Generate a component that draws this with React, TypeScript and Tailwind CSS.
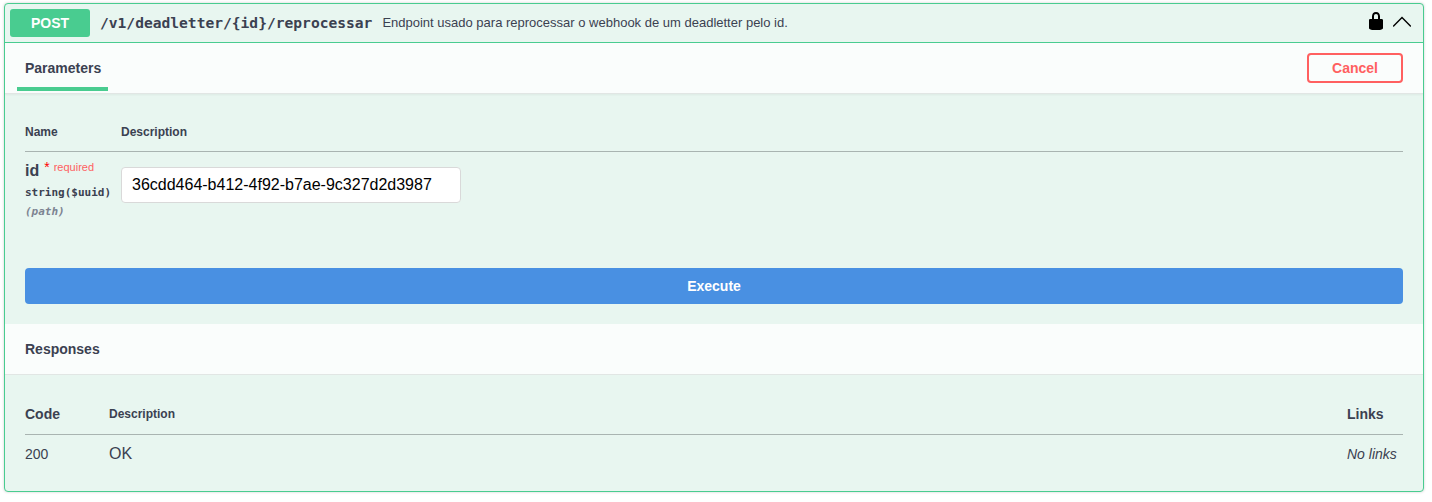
import React from "react";

const sans = "font-['Liberation_Sans',Arial,sans-serif]";
const mono = "font-['DejaVu_Sans_Mono','Liberation_Mono',monospace]";

function LockIcon() {
  return (
    <svg width="20" height="20" viewBox="0 0 20 20" fill="#000" className="shrink-0">
      <path d="M15.8 8H14V5.6C14 2.703 12.665 1 10 1 7.334 1 6 2.703 6 5.6V8H4c-.553 0-1 .646-1 1.199V17c0 .549.428 1.139.951 1.307l1.197.387C5.672 18.861 6.55 19 7.1 19h5.8c.549 0 1.428-.139 1.951-.307l1.196-.387c.524-.167.953-.757.953-1.306V9.199C17 8.646 16.352 8 15.8 8zM12 8H8V5.199C8 3.754 8.797 3 10 3c1.203 0 2 .754 2 2.199V8z" />
    </svg>
  );
}

function ChevronUp() {
  return (
    <svg width="20" height="20" viewBox="0 0 20 20" fill="none" stroke="#000" strokeWidth="1.4" strokeLinecap="round" className="shrink-0">
      <path d="M1.6 15 10 6.6l8.4 8.4" />
    </svg>
  );
}

function Summary() {
  return (
    <div className="flex items-center h-[39px] px-[5px] border-b border-[#49cc90]">
      <div className="w-[80px] h-[28px] flex items-center justify-center rounded-[3px] bg-[#49cc90] text-white text-sm font-bold">
        POST
      </div>
      <div className={`${mono} ml-[10px] text-[14.6px] font-bold text-[#3b4151] whitespace-nowrap`}>
        /v1/deadletter/{"{id}"}/reprocessar
      </div>
      <div className="ml-[10px] text-[13px] text-[#3b4151] flex-1 whitespace-nowrap">
        Endpoint usado para reprocessar o webhook de um deadletter pelo id.
      </div>
      <div className="flex items-center gap-[6px] mr-[6px] mb-[4px]">
        <LockIcon />
        <ChevronUp />
      </div>
    </div>
  );
}

function ParametersHeader() {
  return (
    <div className="flex items-center justify-between h-[51px] pl-3 pr-5 bg-white/80 border-b border-[#e1e6e4] shadow-[0_1px_2px_rgba(0,0,0,0.05)]">
      <div className="self-stretch pt-[15px] w-[91px] px-2 border-b-[4px] border-[#49cc90] mb-[2px] text-sm font-bold text-[#3b4151]">
        Parameters
      </div>
      <button className="w-[96px] h-[30px] flex items-center justify-center rounded border-2 border-[#ff6060] bg-transparent text-sm font-bold text-[#ff6060]">
        Cancel
      </button>
    </div>
  );
}

function ParametersTable() {
  return (
    <div className="px-5 pt-[30px] pb-5">
      <div className="flex border-b border-[#a9b4b1] h-[28px] text-xs font-bold text-[#3b4151]">
        <div className="w-[96px]">Name</div>
        <div>Description</div>
      </div>
      <div className="flex pt-[15px] h-[116px]">
        <div className="w-[96px] -mt-[5px] text-[#3b4151]">
          <div className="flex items-start h-[18px]">
            <span className="text-base font-bold leading-[18px]">id</span>
            <span className="ml-[5px] text-[#ff0000] text-sm leading-[10px]">*</span>
            <span className="ml-[4px] text-[11px] leading-[10px] text-[#ff6060]">required</span>
          </div>
          <div className={`${mono} mt-[5px] text-[11px] leading-[16px] font-semibold whitespace-nowrap`}>string($uuid)</div>
          <div className={`${mono} mt-[3px] text-[11px] leading-[16px] italic font-semibold text-[#7d8492]`}>(path)</div>
        </div>
        <input
          readOnly
          value="36cdd464-b412-4f92-b7ae-9c327d2d3987"
          className="w-[340px] h-[36px] px-[10px] rounded border border-[#d9d9d9] bg-white text-base text-black outline-none"
        />
      </div>
      <button className="w-full h-[36px] rounded bg-[#4990e2] text-sm font-bold text-white">Execute</button>
    </div>
  );
}

function ResponsesHeader() {
  return (
    <div className="flex items-center h-[51px] px-5 bg-white/80 border-b border-[#e1e6e4] text-sm font-bold text-[#3b4151]">
      Responses
    </div>
  );
}

function ResponsesTable() {
  return (
    <div className="px-5 pt-[29px] pb-[19px] text-[#3b4151]">
      <div className="flex items-center border-b border-[#a9b4b1] h-[20px] pb-[10px] box-content">
        <div className="w-[84px] text-sm font-bold">Code</div>
        <div className="flex-1 mb-[1px] text-xs font-bold">Description</div>
        <div className="w-[56px] text-sm font-bold">Links</div>
      </div>
      <div className="flex items-center h-[37px]">
        <div className="w-[84px] text-sm">200</div>
        <div className="flex-1 text-base">OK</div>
        <div className="w-[56px] text-sm italic whitespace-nowrap">No links</div>
      </div>
    </div>
  );
}

export default function App() {
  return (
    <div className={`${sans} min-h-[502px] bg-white pt-[3px] pl-1 pr-2`}>
      <div className="rounded border border-[#49cc90] bg-[#e8f6f0] shadow-[0_0_3px_rgba(0,0,0,0.19)] overflow-hidden">
        <Summary />
        <ParametersHeader />
        <ParametersTable />
        <ResponsesHeader />
        <ResponsesTable />
      </div>
    </div>
  );
}
